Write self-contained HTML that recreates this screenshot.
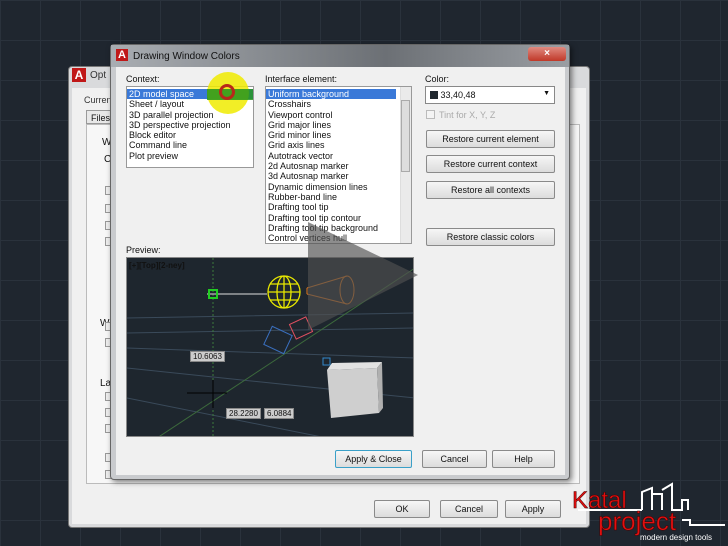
<!DOCTYPE html><html><head><style>
*{margin:0;padding:0;box-sizing:border-box}
body{width:728px;height:546px;overflow:hidden;position:relative;background:#1f262f;font-family:"Liberation Sans",sans-serif;font-size:9px;color:#111;
background-image:linear-gradient(#2a323c 1px,transparent 1px),linear-gradient(90deg,#2a323c 1px,transparent 1px);background-size:40px 40px;}
.a{position:absolute}
.btn{position:absolute;border:1px solid #8a8a8a;border-radius:2px;background:linear-gradient(#f6f6f6,#dcdcdc);text-align:center;font-size:9px;line-height:16px;color:#111}
.list div{height:10.3px;line-height:10.3px;padding-left:2px;white-space:nowrap}
.cb{position:absolute;width:9px;height:9px;border:1px solid #999;background:#eee}
</style></head><body>
<div class="a" style="left:68px;top:66px;width:522px;height:462px;background:#d9dadc;border:1px solid #777;border-radius:4px"></div>
<div class="a" style="left:72px;top:88px;width:514px;height:436px;background:#f0f0f0"></div>
<div class="a" style="left:72px;top:68px;width:14px;height:14px;background:#c01818;color:#fff;font-weight:bold;font-size:12px;line-height:14px;text-align:center">A</div>
<div class="a" style="left:90px;top:70px;font-size:10px;color:#333">Opt</div>
<div class="a" style="left:84px;top:95px;color:#333">Current</div>
<div class="a" style="left:86px;top:110px;width:26px;height:14px;border:1px solid #999;background:#e8e8e8;padding:2px 4px">Files</div>
<div class="a" style="left:86px;top:124px;width:494px;height:360px;border:1px solid #bbb;background:#f7f7f7"></div>
<div class="a" style="left:102px;top:137px;font-size:10px">W</div>
<div class="a" style="left:104px;top:154px;font-size:10px">C</div>
<div class="cb" style="left:105px;top:186px"></div><div class="cb" style="left:105px;top:204px"></div><div class="cb" style="left:105px;top:221px"></div><div class="cb" style="left:105px;top:237px"></div>
<div class="a" style="left:100px;top:318px;font-size:10px">W</div>
<div class="cb" style="left:105px;top:322px"></div><div class="cb" style="left:105px;top:338px"></div>
<div class="a" style="left:100px;top:378px;font-size:10px">La</div>
<div class="cb" style="left:105px;top:392px"></div><div class="cb" style="left:105px;top:408px"></div><div class="cb" style="left:105px;top:424px"></div><div class="cb" style="left:105px;top:453px"></div><div class="cb" style="left:105px;top:470px"></div>
<div class="btn" style="left:374px;top:500px;width:56px;height:18px">OK</div>
<div class="btn" style="left:440px;top:500px;width:58px;height:18px">Cancel</div>
<div class="btn" style="left:505px;top:500px;width:56px;height:18px">Apply</div>
<div class="a" style="left:110px;top:44px;width:460px;height:436px;background:#c9cbce;border:1px solid #666;border-radius:4px;box-shadow:2px 2px 6px rgba(0,0,0,.5)"></div>
<div class="a" style="left:111px;top:45px;width:458px;height:22px;background:linear-gradient(90deg,#a9adb2,#6c7075 60%,#9a9ea3)"></div>
<div class="a" style="left:116px;top:49px;width:12px;height:12px;background:#c01818;color:#fff;font-weight:bold;font-size:11px;line-height:12px;text-align:center">A</div>
<div class="a" style="left:133px;top:51px;font-size:10px;color:#111">Drawing Window Colors</div>
<div class="a" style="left:528px;top:47px;width:38px;height:14px;background:linear-gradient(#e08a80,#c03828);border-radius:3px;color:#fff;text-align:center;font-weight:bold;font-size:10px;line-height:14px">×</div>
<div class="a" style="left:116px;top:67px;width:449px;height:408px;background:#f0f0f0"></div>
<div class="a" style="left:126px;top:74px">Context:</div>
<div class="a list" style="left:126px;top:86px;width:128px;height:82px;border:1px solid #999;background:#fff;padding-top:2px">
<div style="background:#3a79d8;color:#fff">2D model space</div><div>Sheet / layout</div><div>3D parallel projection</div><div>3D perspective projection</div><div>Block editor</div><div>Command line</div><div>Plot preview</div></div>
<div class="a" style="left:207px;top:72px;width:42px;height:42px;border-radius:50%;background:rgba(240,235,0,.85)"></div>
<div class="a" style="left:207px;top:89px;width:46px;height:11px;background:rgba(40,150,30,.85)"></div>
<div class="a" style="left:219px;top:84px;width:16px;height:16px;border-radius:50%;border:3px solid #b8281a"></div>
<div class="a" style="left:265px;top:74px">Interface element:</div>
<div class="a list" style="left:265px;top:86px;width:147px;height:158px;border:1px solid #999;background:#fff;padding-top:2px">
<div style="background:#3a79d8;color:#fff;width:130px">Uniform background</div><div>Crosshairs</div><div>Viewport control</div><div>Grid major lines</div><div>Grid minor lines</div><div>Grid axis lines</div><div>Autotrack vector</div><div>2d Autosnap marker</div><div>3d Autosnap marker</div><div>Dynamic dimension lines</div><div>Rubber-band line</div><div>Drafting tool tip</div><div>Drafting tool tip contour</div><div>Drafting tool tip background</div><div>Control vertices hull</div></div>
<div class="a" style="left:400px;top:87px;width:11px;height:156px;background:#eaeaea;border-left:1px solid #ddd"></div>
<div class="a" style="left:401px;top:100px;width:9px;height:72px;background:#ddd;border:1px solid #aaa"></div>
<div class="a" style="left:425px;top:74px">Color:</div>
<div class="a" style="left:425px;top:86px;width:130px;height:18px;border:1px solid #888;background:#fff;padding:3px 4px"><span style="display:inline-block;width:8px;height:8px;background:#21282f;vertical-align:-1px"></span> 33,40,48<span style="float:right;font-size:7px">▼</span></div>
<div class="cb" style="left:426px;top:110px;background:#f4f4f4;border-color:#bbb"></div>
<div class="a" style="left:439px;top:110px;color:#aaa">Tint for X, Y, Z</div>
<div class="btn" style="left:426px;top:130px;width:129px;height:18px">Restore current element</div>
<div class="btn" style="left:426px;top:155px;width:129px;height:18px">Restore current context</div>
<div class="btn" style="left:426px;top:181px;width:129px;height:18px">Restore all contexts</div>
<div class="btn" style="left:426px;top:228px;width:129px;height:18px">Restore classic colors</div>
<div class="a" style="left:126px;top:245px">Preview:</div>
<div class="a" style="left:126px;top:257px;width:288px;height:180px;background:#1e262e;border:1px solid #888;overflow:hidden">
<svg width="288" height="180" style="position:absolute;left:0;top:0">
<g stroke="#3a4a5a" stroke-width="1" fill="none"><path d="M0 60 L288 55 M0 75 L288 70 M0 90 L288 100 M0 110 L288 140 M0 140 L200 180"/></g>
<path d="M86 0 V180" stroke="#3c7a3c" stroke-dasharray="2 2"/>
<path d="M30 180 L288 10" stroke="#3c6a3c"/>
<path d="M80 36 H140" stroke="#ddd"/>
<rect x="82" y="32" width="8" height="8" fill="none" stroke="#2c2" stroke-width="2"/>
<g stroke="#e8e800" fill="none" stroke-width="1.3"><circle cx="157" cy="34" r="16"/><ellipse cx="157" cy="34" rx="7" ry="16"/><path d="M141 34H173M143 26H171M143 42H171M157 18V50"/></g>
<g stroke="#e07820" fill="none"><ellipse cx="220" cy="32" rx="7" ry="14"/><path d="M180 30L220 18M180 36L220 46M180 30V36"/></g>
<rect x="165" y="62" width="18" height="16" fill="none" stroke="#e05060" transform="rotate(-25 174 70)"/>
<rect x="140" y="72" width="22" height="20" fill="none" stroke="#3a70c0" transform="rotate(25 151 82)"/>
<path d="M60 135 H100 M86 122 V150" stroke="#000"/>
<rect x="196" y="100" width="7" height="7" fill="none" stroke="#38c"/>
<path d="M200 112 L250 110 L252 155 L204 160 Z" fill="#cfcfcf"/>
<path d="M200 112 L205 105 L255 104 L250 110Z" fill="#e2e2e2"/><path d="M250 110 L255 104 L256 150 L252 155Z" fill="#b0b0b0"/>
</svg>
<div class="a" style="left:2px;top:3px;font-size:8px;color:#111;font-weight:bold">[+][Top][2-ney]</div>
<div class="a" style="left:63px;top:93px;background:#ccc;border:1px solid #888;font-size:8px;padding:0 2px">10.6063</div>
<div class="a" style="left:99px;top:150px;background:#ccc;border:1px solid #888;font-size:8px;padding:0 2px">28.2280</div>
<div class="a" style="left:137px;top:150px;background:#ccc;border:1px solid #888;font-size:8px;padding:0 2px">6.0884</div>
</div>
<svg class="a" style="left:300px;top:220px" width="125" height="115"><path d="M8 2 L118 55 L8 110Z" fill="rgba(80,80,80,.65)"/></svg>
<div class="btn" style="left:335px;top:450px;width:77px;height:18px;border-color:#3aa0c8">Apply &amp; Close</div>
<div class="btn" style="left:422px;top:450px;width:65px;height:18px">Cancel</div>
<div class="btn" style="left:492px;top:450px;width:63px;height:18px">Help</div>
<svg class="a" style="left:570px;top:480px" width="158" height="66">
<path d="M72 30 V12 L82 8 V30 M82 14 H92 V30 M92 10 L102 4 V30 H112 V20 H118 V30 M112 40 H120 V45 H155" stroke="#fff" stroke-width="2" fill="none"/>
<path d="M8 30 H72" stroke="#fff" stroke-width="2"/>
<text x="2" y="28" font-family="Liberation Sans" font-size="24" fill="#e01010" stroke="#400" stroke-width=".5">Katal</text>
<text x="28" y="50" font-family="Liberation Sans" font-size="26" fill="#e01010" stroke="#400" stroke-width=".5">project</text>
<text x="70" y="60" font-family="Liberation Sans" font-size="8" fill="#fff">modern design tools</text>
</svg>
</body></html>
